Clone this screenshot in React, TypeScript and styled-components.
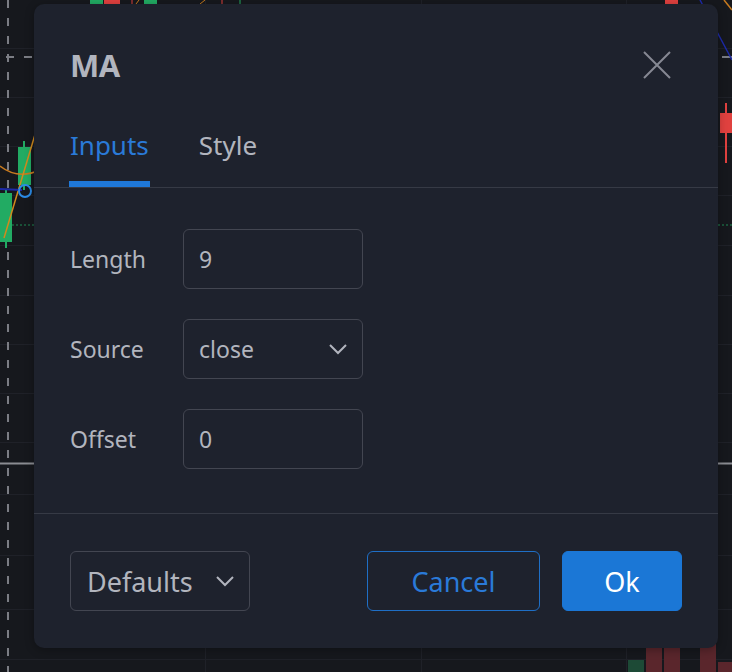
import React from "react";
import styled, { createGlobalStyle } from "styled-components";

const GlobalStyle = createGlobalStyle`
  html, body {
    margin: 0;
    padding: 0;
    background: #16181d;
    font-family: "Noto Sans", "Open Sans", sans-serif;
  }
  #root {
    width: 732px;
    height: 672px;
    position: relative;
    overflow: hidden;
  }
`;

const gridRows = [48, 97, 146, 195, 245, 295, 344, 393, 442, 494, 555, 609, 659];

// chart behind the dialog, drawn like the canvas it is
const ChartBackdrop = () => (
  <Canvas width={732} height={672} viewBox="0 0 732 672">
    {gridRows.map((y) => (
      <line key={y} x1={0} x2={732} y1={y + 0.5} y2={y + 0.5} stroke="#1f2128" strokeWidth={1} />
    ))}
    <line x1={205.5} x2={205.5} y1={0} y2={672} stroke="#1f2128" />
    <line x1={421.5} x2={421.5} y1={0} y2={672} stroke="#1f2128" />
    <line x1={626.5} x2={626.5} y1={0} y2={672} stroke="#1f2128" />

    {/* crosshair */}
    <line x1={8} x2={8} y1={0} y2={672} stroke="#7b7d84" strokeWidth={2} strokeDasharray="8 10" />
    <line x1={0} x2={40} y1={57} y2={57} stroke="#7b7d84" strokeWidth={2} strokeDasharray="8 10" strokeDashoffset={-6} />
    <line x1={722} x2={732} y1={57} y2={57} stroke="#7b7d84" strokeWidth={2} />
    <line x1={0} x2={40} y1={463.5} y2={463.5} stroke="#8a8c92" strokeWidth={2} />
    <line x1={712} x2={732} y1={463.5} y2={463.5} stroke="#8a8c92" strokeWidth={2} />

    {/* left candles */}
    <line x1={0} x2={40} y1={225} y2={225} stroke="#1f8a55" strokeWidth={1} strokeDasharray="2 2" />
    <line x1={6} x2={6} y1={190} y2={248} stroke="#22ab63" strokeWidth={2} />
    <rect x={0} y={193} width={12} height={49} fill="#22ab63" />
    <line x1={24} x2={24} y1={141} y2={190} stroke="#22ab63" strokeWidth={2} />
    <rect x={18} y={147} width={13} height={38} fill="#22ab63" />
    <path d="M0 166 Q18 180 40 170" fill="none" stroke="#c77a1f" strokeWidth={1.5} />
    <path d="M4 238 L40 118" fill="none" stroke="#d18a1d" strokeWidth={1.5} />
    <line x1={0} x2={22} y1={189} y2={190} stroke="#1d2aa8" strokeWidth={2} />
    <circle cx={25} cy={191} r={6} fill="none" stroke="#2b8be6" strokeWidth={2} />

    {/* top candles */}
    <rect x={90} y={0} width={13} height={4} fill="#22ab63" />
    <rect x={104} y={0} width={16} height={4} fill="#e0413f" />
    <line x1={132} x2={132} y1={0} y2={4} stroke="#e0413f" />
    <line x1={136} x2={139} y1={4} y2={0} stroke="#c77a1f" />
    <rect x={144} y={0} width={13} height={4} fill="#22ab63" />
    <line x1={200} x2={205} y1={4} y2={0} stroke="#c77a1f" />
    <line x1={222} x2={222} y1={0} y2={4} stroke="#e0413f" />
    <line x1={240} x2={240} y1={0} y2={4} stroke="#22ab63" />
    <rect x={665} y={0} width={13} height={4} fill="#e0413f" />

    {/* right side */}
    <path d="M700 0 L732 60" fill="none" stroke="#1d2aa8" strokeWidth={1.5} />
    <path d="M724 0 L732 10" fill="none" stroke="#c77a1f" strokeWidth={1.5} />
    <line x1={726} x2={726} y1={103} y2={163} stroke="#e0413f" strokeWidth={2} />
    <rect x={720} y={113} width={12} height={20} fill="#e0413f" />
    <line x1={718} x2={732} y1={225} y2={225} stroke="#1f8a55" strokeDasharray="2 2" />

    {/* volume */}
    <rect x={628} y={660} width={16} height={12} fill="#1d4a36" />
    <rect x={646} y={640} width={16} height={32} fill="#5a262c" />
    <rect x={664} y={640} width={16} height={32} fill="#5a262c" />
    <rect x={700} y={640} width={16} height={32} fill="#5a262c" />
    <rect x={718} y={662} width={14} height={10} fill="#5a262c" />
  </Canvas>
);

const Canvas = styled.svg`
  position: absolute;
  inset: 0;
  display: block;
`;

const Dialog = styled.div`
  position: absolute;
  left: 34px;
  top: 4px;
  width: 684px;
  height: 644px;
  background: #1e222d;
  border-radius: 10px;
  display: flex;
  flex-direction: column;
  box-shadow: 0 2px 10px rgba(0, 0, 0, 0.3);
`;

const Header = styled.div`
  height: 122px;
  padding: 0 46px 0 36px;
  display: flex;
  align-items: center;
  justify-content: space-between;
`;

const Title = styled.h2`
  margin: 0;
  font-size: 31px;
  font-weight: 700;
  color: #b2b5be;
  letter-spacing: -0.5px;
`;

const CloseButton = styled.button`
  width: 30px;
  height: 30px;
  padding: 0;
  border: 0;
  background: transparent;
  display: flex;
  align-items: center;
  justify-content: center;
  cursor: pointer;
`;

const TabBar = styled.div`
  height: 61px;
  padding: 0 36px;
  display: flex;
  gap: 50px;
  border-bottom: 1px solid #363a45;
`;

const Tab = styled.div<{ $active?: boolean }>`
  position: relative;
  font-size: 26px;
  line-height: 36px;
  padding-top: 1px;
  color: ${({ $active }) => ($active ? "#2a7ad8" : "#b2b5be")};

  &::after {
    content: "";
    position: absolute;
    left: -1px;
    right: -1px;
    bottom: 0;
    height: 6px;
    background: ${({ $active }) => ($active ? "#1f78d8" : "transparent")};
  }
`;

const Body = styled.div`
  flex: 1;
  padding: 41px 36px 0;
  display: grid;
  grid-template-columns: 113px 180px;
  grid-auto-rows: 60px;
  row-gap: 30px;
  align-content: start;
  border-bottom: 1px solid #363a45;
`;

const Label = styled.div`
  font-size: 23px;
  color: #b2b5be;
  display: flex;
  align-items: center;
`;

const Field = styled.div`
  box-sizing: border-box;
  height: 60px;
  border: 1px solid #434651;
  border-radius: 6px;
  padding: 0 14px 0 15px;
  display: flex;
  align-items: center;
  justify-content: space-between;
  font-size: 23px;
  color: #b2b5be;
`;

const Footer = styled.div`
  height: 134px;
  padding: 0 36px;
  display: flex;
  align-items: center;
  gap: 22px;
`;

const Button = styled.button<{ $variant: "ghost" | "outline" | "primary"; $w: number }>`
  box-sizing: border-box;
  width: ${({ $w }) => $w}px;
  height: 60px;
  border-radius: 6px;
  font-family: inherit;
  font-size: 27px;
  cursor: pointer;
  display: flex;
  align-items: center;
  justify-content: ${({ $variant }) => ($variant === "ghost" ? "space-between" : "center")};
  padding: ${({ $variant }) => ($variant === "ghost" ? "0 14px 0 16px" : "0")};
  border: 1px solid
    ${({ $variant }) => ($variant === "ghost" ? "#434651" : $variant === "outline" ? "#1f6fc6" : "#1b77d6")};
  background: ${({ $variant }) => ($variant === "primary" ? "#1b77d6" : "transparent")};
  color: ${({ $variant }) => ($variant === "ghost" ? "#b2b5be" : $variant === "outline" ? "#2a7ad8" : "#ffffff")};
`;

const Spacer = styled.div`
  flex: 1;
`;

const Chevron = () => (
  <svg width="20" height="12" viewBox="0 0 20 12">
    <path d="M2 2 L10 10 L18 2" fill="none" stroke="#b2b5be" strokeWidth="2" />
  </svg>
);

const CloseIcon = () => (
  <svg width="30" height="30" viewBox="0 0 30 30">
    <path d="M2 2 L28 28 M28 2 L2 28" stroke="#868993" strokeWidth="2" />
  </svg>
);

const inputs = [
  { label: "Length", value: "9" },
  { label: "Source", value: "close", select: true },
  { label: "Offset", value: "0" },
];

export default function App() {
  return (
    <>
      <GlobalStyle />
      <ChartBackdrop />
      <Dialog>
        <Header>
          <Title>MA</Title>
          <CloseButton>
            <CloseIcon />
          </CloseButton>
        </Header>
        <TabBar>
          <Tab $active>Inputs</Tab>
          <Tab>Style</Tab>
        </TabBar>
        <Body>
          {inputs.map((row) => (
            <React.Fragment key={row.label}>
              <Label>{row.label}</Label>
              <Field>
                <span>{row.value}</span>
                {row.select && <Chevron />}
              </Field>
            </React.Fragment>
          ))}
        </Body>
        <Footer>
          <Button $variant="ghost" $w={180}>
            Defaults
            <Chevron />
          </Button>
          <Spacer />
          <Button $variant="outline" $w={173}>Cancel</Button>
          <Button $variant="primary" $w={120}>Ok</Button>
        </Footer>
      </Dialog>
    </>
  );
}
